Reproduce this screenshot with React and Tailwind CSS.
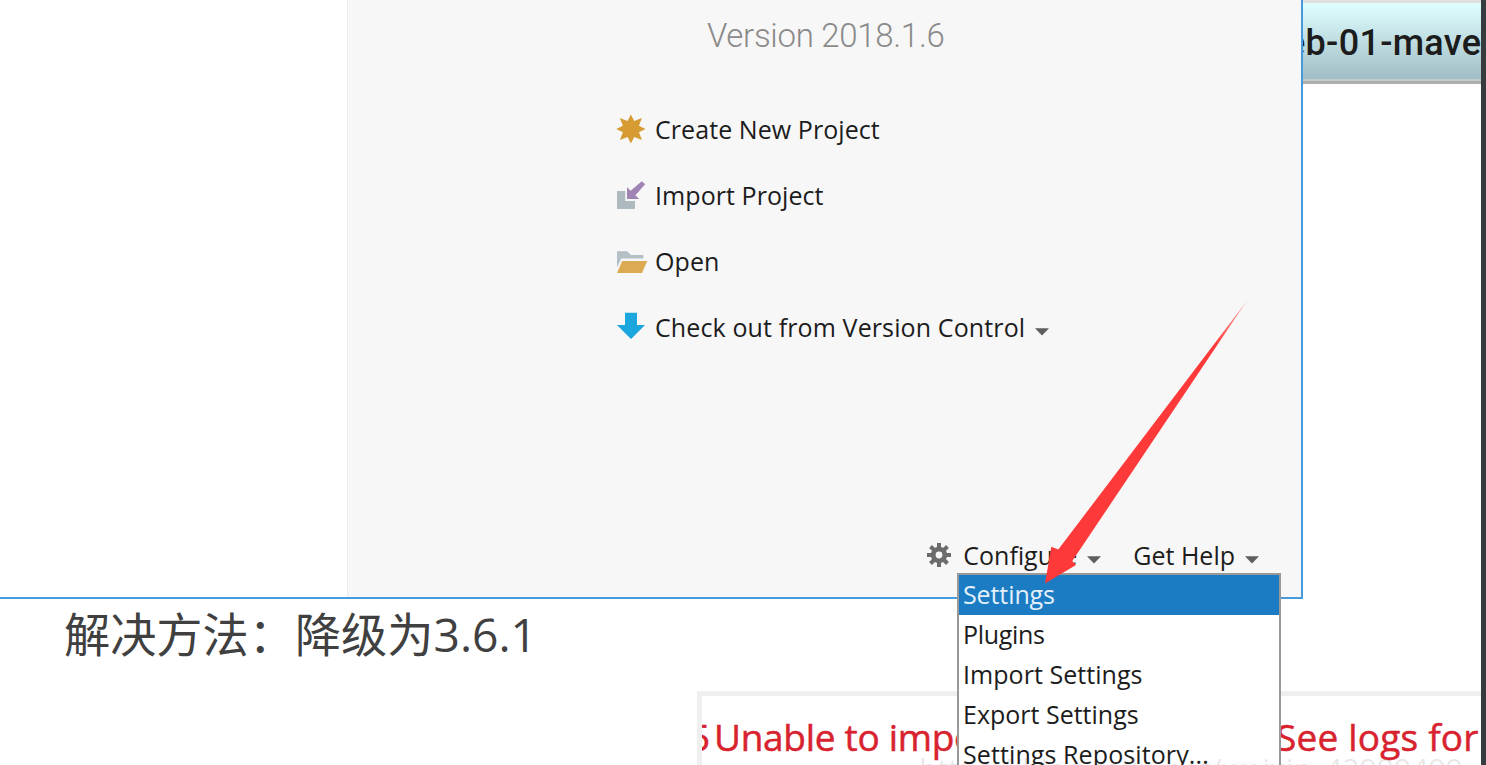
const starPoints = Array.from({ length: 16 }, (_, i) => {
  const r = i % 2 ? 8.7 : i % 4 === 0 ? 14.6 : 15.6;
  const a = (i * Math.PI) / 8;
  return `${(14.9 + r * Math.cos(a)).toFixed(2)},${(15 + r * Math.sin(a)).toFixed(2)}`;
}).join(" ");

function StarIcon() {
  return <polygon points={starPoints} fill="#d79b34" />;
}

function ImportIcon() {
  return (
    <>
      <path d="M1 11H9.2V21H19V29H1Z" fill="#aeb9c0" />
      <path d="M11 7L14.6 10.8L25.8 1.2L29.2 4.2L19.4 15.3L23.2 19H11Z" fill="#a084b4" />
    </>
  );
}

function FolderIcon() {
  return (
    <>
      <path d="M1 5.2H11.2L15 9H27.3V12.6H5.2L1 21.5Z" fill="#b5bfc6" />
      <path d="M6.2 15H31.3L26 27H1Z" fill="#dcaa53" />
    </>
  );
}

function CheckoutIcon() {
  return <path d="M9 .7H21V13H29L15 27L1 13H9Z" fill="#1ba6de" />;
}

function Caret({ className }) {
  return (
    <svg className={className} width="14" height="8" viewBox="0 0 14 8">
      <path d="M0 .3H14L7 7.6Z" fill="#5e5e5e" />
    </svg>
  );
}

function Gear() {
  return (
    <svg width="24" height="24" viewBox="-12 -12 24 24" className="shrink-0">
      {[0, 45, 90, 135].map((a) => (
        <rect key={a} x="-2" y="-12" width="4" height="24" fill="#6c6c6c" transform={`rotate(${a})`} />
      ))}
      <circle r="8.2" fill="#6c6c6c" />
      <circle r="3.4" fill="#f6f6f6" />
    </svg>
  );
}

const actions = [
  { label: "Create New Project", Icon: StarIcon, tracking: "tracking-[0.07px]" },
  { label: "Import Project", Icon: ImportIcon, tracking: "tracking-[0.07px]" },
  { label: "Open", Icon: FolderIcon, tracking: "tracking-[0.07px]" },
  { label: "Check out from Version Control", Icon: CheckoutIcon, tracking: "tracking-[0.12px]", caret: true },
];

const menuItems = [
  { label: "Settings", tracking: "tracking-[-0.1px]", selected: true },
  { label: "Plugins", tracking: "tracking-[-0.3px]" },
  { label: "Import Settings", tracking: "tracking-[0.05px]" },
  { label: "Export Settings", tracking: "tracking-normal" },
  { label: "Settings Repository...", tracking: "tracking-[0.1px]" },
];

function WelcomePanel() {
  return (
    <section className="flex flex-1 flex-col border-l border-[#ececec] bg-[#f7f7f7]">
      <h1 className="h-24 pl-[359px] font-['Roboto',sans-serif] text-[33px] font-light leading-[71px] tracking-[-0.3px] text-[#8a8a8a]">
        Version 2018.1.6
      </h1>
      <ul className="flex flex-col pl-[268px]">
        {actions.map(({ label, Icon, tracking, caret }) => (
          <li key={label} className="flex h-[66px] items-center">
            <svg width="32" height="30" viewBox="0 0 32 30" className="mr-[7px] shrink-0">
              <Icon />
            </svg>
            <span className={`pt-0.5 ${tracking}`}>{label}</span>
            {caret && <Caret className="ml-2.5 mt-2.5" />}
          </li>
        ))}
      </ul>
      <div className="mt-auto flex h-[84px] items-center justify-end pr-[42px]">
        <Gear />
        <span className="ml-3 pt-px">Configure</span>
        <Caret className="ml-[10px] mt-[10px]" />
        <span className="ml-8 pt-px">Get Help</span>
        <Caret className="ml-[10px] mt-[10px]" />
      </div>
    </section>
  );
}

export default function App() {
  return (
    <div className="relative flex h-[765px] w-[1486px] overflow-hidden bg-white font-['Open_Sans','Noto_Sans_CJK_SC',sans-serif] text-[25px] text-[#1c1c1c]">
      <main className="flex w-[1481px] shrink-0 flex-col">
        <div className="flex h-[599px] shrink-0">
          <div className="flex w-[1303px] shrink-0 border-b-2 border-r-2 border-[#479bdd]">
            <div className="w-[347px] shrink-0" />
            <WelcomePanel />
          </div>
          <div className="min-w-0 flex-1">
            <div className="h-[84px] overflow-hidden whitespace-nowrap border-b-[3px] border-t-[3px] border-b-[#adadad] border-t-[#e0e0e0] bg-linear-to-b from-[#dfffff] to-[#a0bcc4] font-['Roboto',sans-serif] text-[36px] leading-[80px]">
              <div className="h-[78px] border-b-2 border-[#c4cbcd] indent-[-17px] font-medium tracking-[0.3px]">eb-01-maven</div>
            </div>
          </div>
        </div>
        <p className="h-[92px] shrink-0 pl-16 pt-px text-[46.2px] leading-[70px] text-[#404040]">
          解决方法：降级为3.6.1
        </p>
        <div className="ml-[697px] flex h-[120px] shrink-0 overflow-hidden whitespace-nowrap border-l-[5px] border-t-[5px] border-[#efefef] text-[37px] leading-[81px] text-[#d8232f] [-webkit-text-stroke:0.5px]">
          <span className="ml-[-13px] w-[25px]">5</span>
          <span className="w-[562px] tracking-[-0.3px]">Unable to import</span>
          <span className="tracking-[0.2px]">See logs for</span>
        </div>
      </main>
      <div className="flex-1 bg-[#363b3e]" />

      <ul className="absolute left-[957px] top-[573px] w-[324px] border-2 border-[#999999] bg-white pb-2">
        {menuItems.map(({ label, tracking, selected }) => (
          <li
            key={label}
            className={`h-10 pl-1 leading-[38px] ${tracking} ${selected ? "bg-[#1b7cc4] text-[#e3f0fa]" : ""}`}
          >
            {label}
          </li>
        ))}
      </ul>

      <svg className="absolute left-[1040px] top-[295px]" width="212" height="292" viewBox="1040 295 212 292">
        <defs>
          <linearGradient id="fade" gradientUnits="userSpaceOnUse" x1="1247" y1="301" x2="1215" y2="346">
            <stop offset="0" stopColor="#fd3a39" stopOpacity=".35" />
            <stop offset="1" stopColor="#fd3a39" />
          </linearGradient>
        </defs>
        <path d="M1247.5 300L1058.3 549.5L1051.3 546.7L1045 583.5L1076 565L1072.3 561Z" fill="url(#fade)" />
      </svg>

      <p className="absolute left-[919px] top-[749px] whitespace-nowrap text-[30px] leading-10 tracking-[0.1px] text-black/10">
        https://blog.csdn.net/weixin_42999499
      </p>
    </div>
  );
}
